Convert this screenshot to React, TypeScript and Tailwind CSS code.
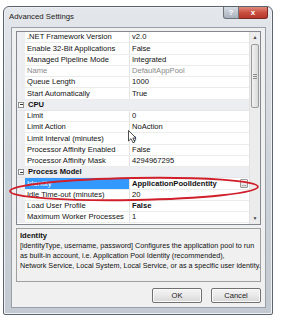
import React from 'react';

type Row =
  | { cat: string }
  | { l: string; v: string; dim?: boolean; sel?: boolean; bold?: boolean; btn?: boolean };

const rows: Row[] = [
  { l: '.NET Framework Version', v: 'v2.0' },
  { l: 'Enable 32-Bit Applications', v: 'False' },
  { l: 'Managed Pipeline Mode', v: 'Integrated' },
  { l: 'Name', v: 'DefaultAppPool', dim: true },
  { l: 'Queue Length', v: '1000' },
  { l: 'Start Automatically', v: 'True' },
  { cat: 'CPU' },
  { l: 'Limit', v: '0' },
  { l: 'Limit Action', v: 'NoAction' },
  { l: 'Limit Interval (minutes)', v: '5' },
  { l: 'Processor Affinity Enabled', v: 'False' },
  { l: 'Processor Affinity Mask', v: '4294967295' },
  { cat: 'Process Model' },
  { l: 'Identity', v: 'ApplicationPoolIdentity', sel: true, bold: true, btn: true },
  { l: 'Idle Time-out (minutes)', v: '20' },
  { l: 'Load User Profile', v: 'False', bold: true },
  { l: 'Maximum Worker Processes', v: '1' },
];

const GridRow: React.FC<{ row: Row }> = ({ row }) => {
  if ('cat' in row) {
    return (
      <div className="flex h-[11.25px] items-center bg-[#eceef1] border-b border-[#e4e6ea]">
        <div className="w-[8px] h-full flex items-center justify-center">
          {/* collapse box */}
          <div className="w-[6px] h-[6px] border border-[#8e8f8f] bg-white flex items-center justify-center">
            <div className="w-[3px] h-px bg-[#333]" />
          </div>
        </div>
        <span className="pl-[3px] font-bold">{row.cat}</span>
      </div>
    );
  }
  return (
    <div className="flex h-[11.25px] border-b border-[#ececec]">
      <div className="w-[8px] h-full bg-[#eceef1]" />
      <div
        className={`w-[105px] h-full flex items-center pl-[2px] border-r border-[#e4e4e4] whitespace-nowrap overflow-hidden ${
          row.sel ? 'bg-[#3399ff] text-white' : row.dim ? 'text-[#8a8a8a]' : ''
        }`}
      >
        {row.l}
      </div>
      <div
        className={`flex-1 h-full flex items-center pl-[2px] whitespace-nowrap ${
          row.dim ? 'text-[#8a8a8a]' : ''
        } ${row.bold ? 'font-bold' : ''}`}
      >
        <span className="flex-1">{row.v}</span>
        {row.btn && (
          <div className="w-[8px] h-[9px] mr-[1px] border border-[#9a9a9a] rounded-[1px] bg-gradient-to-b from-[#fafafa] to-[#dcdcdc] flex items-end justify-center text-[6px] leading-[6px] font-normal">
            ...
          </div>
        )}
      </div>
    </div>
  );
};

const Button: React.FC<{ label: string }> = ({ label }) => (
  <div className="w-[50px] h-[15px] border border-[#707070] rounded-[2px] bg-gradient-to-b from-[#f4f4f4] via-[#e9e9e9] to-[#d6d6d6] flex items-center justify-center text-[7.6px] text-[#1a1a1a] shadow-[inset_0_0_0_1px_#fbfbfb]">
    {label}
  </div>
);

export default function App() {
  return (
    <div className="relative w-[281px] h-[320px] bg-white overflow-hidden font-['Segoe_UI','Liberation_Sans',sans-serif] text-[7.6px] text-[#111]">
      {/* window */}
      <div className="mt-[6px] ml-[3px] w-[270px] h-[309px] flex flex-col rounded-t-[6px] rounded-b-[2px] border border-[#5c646d] bg-gradient-to-b from-[#e4e7eb] via-[#cfd4da] to-[#c3c9d0] shadow-[inset_0_0_0_1px_#eef0f3]">
        {/* title bar */}
        <div className="h-[20px] flex items-start shrink-0">
          <span className="pl-[5px] pt-[4px] text-[7.8px] text-[#222]">Advanced Settings</span>
          <div className="ml-auto mr-[4px] flex">
            <div className="w-[16px] h-[12px] rounded-bl-[3px] border border-[#6d747c] border-t-0 bg-gradient-to-b from-[#d8dde3] to-[#a9b1bb] flex items-center justify-center text-white text-[8px] font-bold">
              ?
            </div>
            <div className="w-[29px] h-[12px] rounded-br-[3px] border border-[#7a2a22] border-t-0 border-l-0 bg-gradient-to-b from-[#e0897c] via-[#c94f3f] to-[#b5382a] flex items-center justify-center text-white text-[8px] font-bold">
              x
            </div>
          </div>
        </div>

        {/* client area */}
        <div className="ml-[7px] mr-[6px] mb-[6px] flex-1 border border-[#98a0aa] bg-[#f0f0f0] pl-[4px] pr-[4px] pt-[3px] flex flex-col">
          {/* property grid */}
          <div className="h-[194px] border border-[#828790] bg-white flex">
            <div className="flex-1 flex flex-col">
              {rows.map((r, i) => (
                <GridRow key={i} row={r} />
              ))}
            </div>
            {/* scrollbar */}
            <div className="w-[11px] bg-[#ececec] border-l border-[#e2e2e2] flex flex-col">
              <div className="h-[11px] flex items-center justify-center text-[5px] text-[#444]">▲</div>
              <div className="mx-[1px] mt-[1px] h-[64px] rounded-[2px] border border-[#9b9b9b] bg-gradient-to-r from-[#f3f3f3] to-[#d9d9d9] flex flex-col items-center justify-center gap-[1px]">
                <div className="w-[4px] h-px bg-[#8c8c8c]" />
                <div className="w-[4px] h-px bg-[#8c8c8c]" />
                <div className="w-[4px] h-px bg-[#8c8c8c]" />
              </div>
              <div className="flex-1" />
              <div className="h-[11px] flex items-center justify-center text-[5px] text-[#444]">▼</div>
            </div>
          </div>

          {/* description */}
          <div className="mt-[3px] h-[54px] border border-[#a0a0a0] pl-[3px] pt-[2px] leading-[10px] whitespace-nowrap text-[7.2px]">
            <div className="font-bold text-[7.6px]">Identity</div>
            <div>[identityType, username, password] Configures the application pool to run</div>
            <div>as built-in account, i.e. Application Pool Identity (recommended),</div>
            <div>Network Service, Local System, Local Service, or as a specific user identity.</div>
          </div>

          {/* buttons */}
          <div className="mt-[6px] flex justify-end gap-[9px]">
            <Button label="OK" />
            <Button label="Cancel" />
          </div>
        </div>
      </div>

      {/* red ellipse annotation */}
      <svg className="absolute left-0 top-0 pointer-events-none" width="281" height="320">
        <ellipse cx="134" cy="189" rx="124" ry="11" fill="none" stroke="#d01f2a" strokeWidth="1.8" transform="rotate(-1 134 189)" />
      </svg>

      {/* mouse cursor */}
      <svg className="absolute left-[128px] top-[130px] pointer-events-none" width="10" height="14" viewBox="0 0 10 14">
        <path d="M0.5 0.5 L0.5 11 L3 8.7 L5 12.8 L6.8 12 L4.9 8 L8 8 Z" fill="#fff" stroke="#222" strokeWidth="0.8" strokeLinejoin="round" />
      </svg>
    </div>
  );
}
